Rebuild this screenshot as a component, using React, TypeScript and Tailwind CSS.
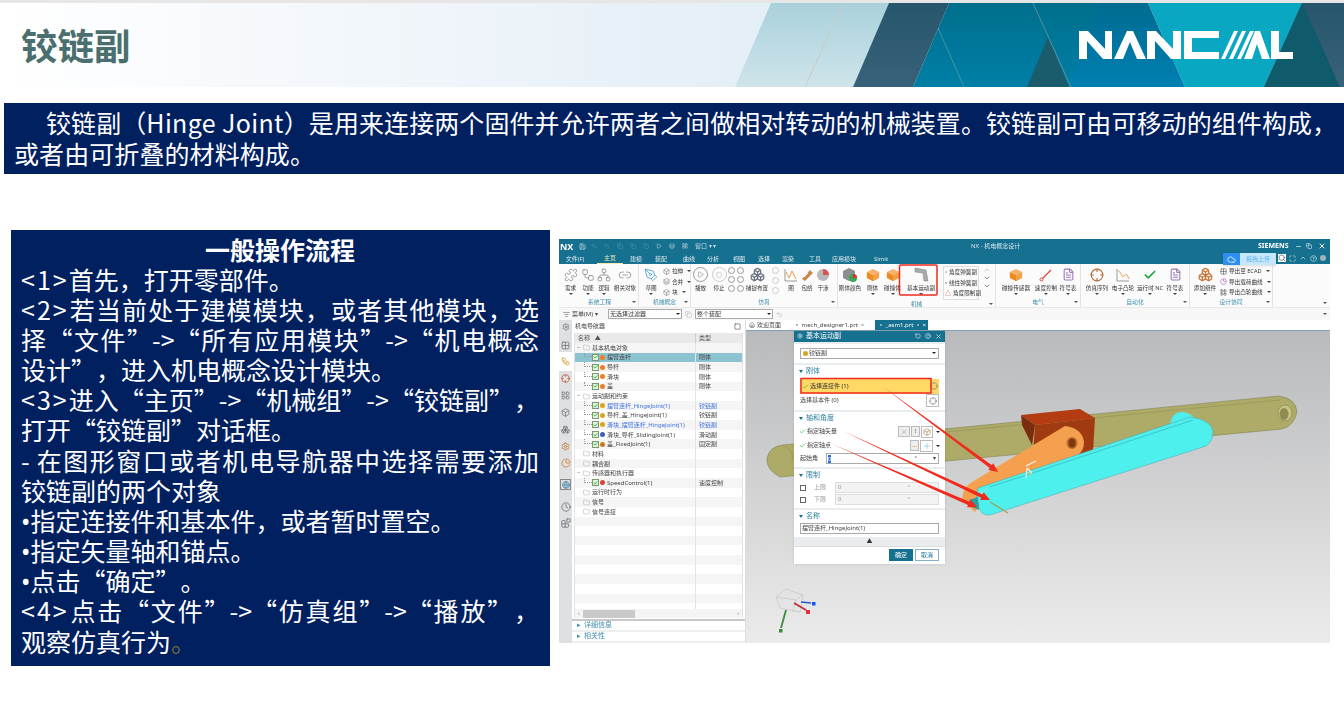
import React from "react";
import {
  Puzzle, Workflow, Network, Link2, PenTool, Settings, Grid2x2, Play, Square, ChevronUp, ChevronDown,
  Search, Maximize, CircleHelp, X, Minus, Copy, Folder, Check, RotateCcw, Crosshair, Clock, PieChart,
  Globe, Boxes, Box, Layers, ListFilter, Undo2, Save, LayoutGrid, House, FileText, Cloud, Share2, Blocks, Plus,
} from "lucide-react";

const CN = "font-['Noto_Sans_CJK_SC','Noto_Sans',sans-serif]";
const UI = "font-['Noto_Sans','Noto_Sans_CJK_SC',sans-serif]";

function Cube({ c = "#f08a1d", s = 15 }: { c?: string; s?: number }) {
  return (
    <svg width={s} height={s} viewBox="0 0 16 16">
      <path d="M8 1 15 4.500 8 8 1 4.500Z" fill={c} opacity="0.65" />
      <path d="M1 4.500 8 8V15L1 11.500Z" fill={c} />
      <path d="M15 4.500 8 8V15L15 11.500Z" fill={c} opacity="0.8" />
    </svg>
  );
}

function Caret() {
  return <span className="block w-0 h-0 border-x-[2px] border-x-transparent border-t-[2.500px] border-t-[#444] mt-[1px]" />;
}

function Tool({ w, label, icon, caret = true }: { w: number; label: string; icon: React.ReactNode; caret?: boolean }) {
  return (
    <div className="flex flex-col items-center shrink-0" style={{ width: w }}>
      <div className="h-[17px] flex items-center justify-center">{icon}</div>
      <span className="text-[5.600px] leading-[8px] mt-[1px] text-[#333] whitespace-nowrap">{label}</span>
      {caret && <Caret />}
    </div>
  );
}

function Group({ w, label, children, more = true }: { w: number; label: string; children: React.ReactNode; more?: boolean }) {
  return (
    <div className="flex flex-col shrink-0 border-r border-[#e4e4e4] h-full" style={{ width: w }}>
      <div className="flex-1 flex items-start pt-[2px]">{children}</div>
      <div className="relative h-[9px] text-center text-[5.800px] leading-[9px] text-[#3f8fae]">
        {label}
        {more && <span className="absolute right-[2px] top-[3px] w-0 h-0 border-x-[2px] border-x-transparent border-t-[2.500px] border-t-[#555]" />}
      </div>
    </div>
  );
}

function StackRow({ icon, label, caret = true }: { icon: React.ReactNode; label: string; caret?: boolean }) {
  return (
    <div className="flex items-center gap-[2px] h-[10.500px] text-[5.600px] text-[#333] whitespace-nowrap">
      {icon}
      <span>{label}</span>
      {caret && <span className="ml-[2px] w-0 h-0 border-x-[2px] border-x-transparent border-t-[2.500px] border-t-[#444]" />}
    </div>
  );
}

const gray = "#7b7f84";

function Ribbon() {
  return (
    <div className="flex h-[43px] bg-[#fbfbfb] pl-[2px]">
      <Group w={78} label="系统工程">
        <Tool w={19} label="需求" icon={<Puzzle size={14} color={gray} strokeWidth={1.2} />} />
        <Tool w={16} label="功能" icon={<Workflow size={14} color={gray} strokeWidth={1.2} />} />
        <Tool w={16} label="逻辑" icon={<Network size={14} color={gray} strokeWidth={1.2} />} />
        <Tool w={26} label="相关对象" caret={false} icon={<Link2 size={14} color={gray} strokeWidth={1.2} />} />
      </Group>
      <Group w={52} label="机械概念">
        <Tool w={24} label="草图" icon={<PenTool size={14} color="#3d96c9" strokeWidth={1.3} />} />
        <div className="flex flex-col">
          <StackRow icon={<Box size={7} color={gray} />} label="拉伸" />
          <StackRow icon={<Layers size={7} color={gray} />} label="合并" />
          <StackRow icon={<Box size={7} color={gray} />} label="块" />
        </div>
      </Group>
      <Group w={147} label="仿真">
        <Tool w={19} label="播放" caret={false} icon={<span className="w-[15px] h-[15px] rounded-full border border-[#999] flex items-center justify-center"><Play size={7} color="#888" /></span>} />
        <Tool w={18} label="停止" caret={false} icon={<span className="w-[15px] h-[15px] rounded-full border border-[#ccc] flex items-center justify-center"><Square size={6} color="#bbb" /></span>} />
        <div className="grid grid-cols-2 w-[18px] pt-[1px] shrink-0">
          {[0, 1, 2, 3, 4, 5].map((i) => <span key={i} className="w-[7px] h-[7px] mb-[2px] rounded-full border border-[#999]" />)}
        </div>
        <Tool w={22} label="捕捉布置" caret={false} icon={<Boxes size={15} color="#6b7280" />} />
        <div className="flex flex-col gap-[3px] w-[15px] shrink-0 items-center pt-[1px]">
          {[0, 1, 2].map((i) => <span key={i} className="w-[7px] h-[7px] rounded-full border border-[#ccc]" />)}
        </div>
        <Tool w={16} label="图" caret={false} icon={<svg width="14" height="14" viewBox="0 0 14 14" fill="none"><path d="M1 1V13H13" stroke="#999" /><path d="M2 4 5 10 8 3 12 11" stroke="#e89a4a" /></svg>} />
        <Tool w={16} label="包络" caret={false} icon={<svg width="14" height="14" viewBox="0 0 14 14"><path d="M2 11 10 2 13 5 5 13Z" fill="#c8894e" /><path d="M4 9 8 5" stroke="#fff" /></svg>} />
        <Tool w={16} label="干涉" caret={false} icon={<svg width="14" height="14" viewBox="0 0 14 14"><circle cx="7" cy="7" r="6" fill="#b9b9b9" /><path d="M7 1A6 6 0 0 1 13 7H7Z" fill="#d9534f" /></svg>} />
      </Group>
      <Group w={158} label="机械">
        <Tool w={24} label="刚体颜色" caret={false} icon={<svg width="16" height="16" viewBox="0 0 16 16"><path d="M7 1 13 4V11L7 14 1 11V4Z" fill="#8b8f94" /><circle cx="11" cy="11" r="4" fill="#3aa655" /><path d="M11 7A4 4 0 0 1 15 11H11Z" fill="#d9342c" /></svg>} />
        <Tool w={21} label="刚体" icon={<Cube s={14} />} />
        <Tool w={19} label="碰撞体" icon={<Cube s={14} />} />
        <Tool w={38} label="基本运动副" icon={<svg width="18" height="18" viewBox="0 0 18 18" fill="none"><path d="M3 2 14 4 16 15 12 15 11 7 3 6Z" fill="#a8abae" stroke="#777" strokeWidth="0.5" /></svg>} />
        <div className="flex flex-col border border-[#ddd] ml-[3px] px-[1px] w-[36px]">
          <StackRow caret={false} icon={<Share2 size={6} color="#c73" />} label="角度弹簧副" />
          <StackRow caret={false} icon={<Share2 size={6} color="#46a" />} label="线性弹簧副" />
          <StackRow caret={false} icon={<span className="text-[#d33] text-[6px] leading-none">△</span>} label="角度限制副" />
        </div>
        <div className="flex flex-col items-center text-[#555] ml-[3px] w-[9px]">
          <ChevronUp size={8} color="#aaa" />
          <ChevronDown size={8} />
          <ChevronDown size={8} />
        </div>
      </Group>
      <Group w={85} label="电气">
        <Tool w={40} label="碰撞传感器" icon={<Cube s={14} />} />
        <Tool w={20} label="速度控制" icon={<svg width="14" height="14" viewBox="0 0 14 14" fill="none"><path d="M2 12 12 2" stroke="#d9453a" strokeWidth="1.200" /><circle cx="2.500" cy="11.500" r="1.500" fill="#fff" stroke="#d9453a" /></svg>} />
        <Tool w={24} label="符号表" icon={<FileText size={13} color="#9a7ab8" />} />
      </Group>
      <Group w={109} label="自动化">
        <Tool w={32} label="仿真序列" icon={<Crosshair size={14} color="#b0703a" />} />
        <Tool w={20} label="电子凸轮" icon={<svg width="14" height="14" viewBox="0 0 14 14" fill="none"><path d="M1 1V13H13" stroke="#999" /><path d="M2 3C5 3 6 11 8 8S11 6 13 11" stroke="#e89a4a" /></svg>} />
        <Tool w={34} label="运行时 NC" icon={<Check size={14} color="#22a545" strokeWidth={3} />} />
        <Tool w={16} label="符号表" icon={<FileText size={13} color="#9a7ab8" />} />
      </Group>
      <Group w={83} label="设计协同">
        <Tool w={30} label="添加组件" icon={<Boxes size={15} color="#c8783a" />} />
        <div className="flex flex-col">
          <StackRow icon={<Grid2x2 size={7} color="#555" />} label="导出至 ECAD" />
          <StackRow icon={<PieChart size={7} color="#a04ab8" />} label="导出载荷曲线" />
          <StackRow icon={<LayoutGrid size={7} color="#555" />} label="导出凸轮曲线" />
        </div>
      </Group>
      <div className="flex-1 relative"><span className="absolute right-[3px] bottom-[3px] w-0 h-0 border-x-[2px] border-x-transparent border-t-[2.500px] border-t-[#555]" /></div>
    </div>
  );
}

const menu: [string, number][] = [["文件(F)", 575], ["主页", 610], ["建模", 636], ["装配", 661], ["曲线", 689], ["分析", 713], ["视图", 739], ["选择", 764], ["渲染", 788], ["工具", 815], ["应用模块", 844], ["Simit", 881]];

function TitleBars() {
  return (
    <div className="bg-[#16708f] text-white">
      <div className="h-[14px] flex items-center pl-[1px] pr-[4px]">
        <span className="font-bold text-[9px] leading-none w-[19px] shrink-0">NX</span>
        <Save size={7} color="#cfe3ea" className="shrink-0" />
        <div className="flex items-center gap-[7px] ml-[5px] w-[156px] shrink-0 opacity-75">
          <Undo2 size={6} color="#5fa0b8" /><Undo2 size={6} color="#5fa0b8" /><Copy size={6} color="#5fa0b8" /><Copy size={6} color="#5fa0b8" /><Copy size={6} color="#5fa0b8" />
          <Play size={6} color="#fff" /><Layers size={6} color="#fff" /><LayoutGrid size={6} color="#fff" />
          <span className="text-[6px] whitespace-nowrap">窗口 ▾ ▾</span>
        </div>
        <span className="ml-[224px] w-[140px] shrink-0 text-[6px] text-[#d6e6ec]">NX - 机电概念设计</span>
        <span className="ml-[147px] text-[7px] font-bold w-[37px] shrink-0">SIEMENS</span>
        <Minus size={7} className="shrink-0" />
        <Copy size={6} className="ml-[4px] shrink-0" />
        <X size={8} className="ml-[6px] shrink-0" strokeWidth={3} />
      </div>
      <div className="h-[11px] flex items-center text-[6px] text-[#d9e8ee]">
        {menu.map(([t, c], i) => {
          const prev = i ? menu[i - 1][1] + 13 : 559;
          return (
            <span key={t} className={`w-[26px] shrink-0 whitespace-nowrap text-center leading-[10px] ${i === 1 ? "text-[#f5e9b0] border-b border-[#f5e9b0]" : ""}`} style={{ marginLeft: c - 13 - prev }}>{t}</span>
          );
        })}
      </div>
    </div>
  );
}

function FilterBar() {
  const Sel = ({ w, t }: { w: number; t: string }) => (
    <div className="h-[10px] border border-[#aaa] bg-white flex items-center justify-between px-[1px] text-[6px] text-[#333]" style={{ width: w }}>
      <span>{t}</span><span className="w-0 h-0 border-x-[2px] border-x-transparent border-t-[2.500px] border-t-[#222]" />
    </div>
  );
  return (
    <div className="h-[13px] bg-[#f7f7f7] border-t border-[#e8e8e8] flex items-center pl-[4px] text-[6px] text-[#444]">
      <ListFilter size={7} color="#666" />
      <span className="ml-[2px] w-[36px]">菜单(M) ▾</span>
      <Sel w={74} t="无选择过滤器" />
      <Copy size={7} color="#bbb" className="mx-[3px]" />
      <Sel w={78} t="整个装配" />
      <Undo2 size={7} color="#bbb" className="ml-[3px]" />
      <span className="flex-1" />
      <span className="mr-[3px] w-0 h-0 border-x-[2px] border-x-transparent border-t-[2.500px] border-t-[#555]" />
    </div>
  );
}

function LeftStrip() {
  const c = "#6f7378";
  return (
    <div className="w-[13px] shrink-0 bg-[#dfe0e2] flex flex-col items-center">
      <Settings size={8} color={c} className="mt-[3px]" />
      <Grid2x2 size={9} color={c} className="mt-[10px]" />
      <div className="w-full h-[19px] bg-white flex items-center justify-center mt-[2px]"><Workflow size={9} color="#d2952a" /></div>
      <Crosshair size={9} color="#c0553a" className="mt-[3px]" />
      <LayoutGrid size={9} color={c} className="mt-[8px]" />
      <Box size={9} color={c} className="mt-[8px]" />
      <Boxes size={9} color={c} className="mt-[8px]" />
      <Settings size={9} color="#c0702a" className="mt-[8px]" />
      <PieChart size={10} color="#d08030" className="mt-[7px]" />
      <div className="w-[11px] h-[11px] border border-[#888] bg-[#ddd] flex items-center justify-center mt-[11px]"><Globe size={8} color="#2a7ca8" /></div>
      <Clock size={10} color={c} className="mt-[12px]" />
      <Blocks size={10} color={c} className="mt-[6px]" />
    </div>
  );
}

type Row = { l: number; n?: string; t?: string; blue?: boolean; sel?: boolean; folder?: boolean; minus?: boolean; dot?: string };
const rows: Row[] = [
  { l: 0, n: "基本机电对象", folder: true, minus: true },
  { l: 1, n: "摆臂连杆", t: "刚体", sel: true, dot: "#ef7d22" },
  { l: 1, n: "导杆", t: "刚体", dot: "#ef7d22" },
  { l: 1, n: "滑块", t: "刚体", dot: "#ef7d22" },
  { l: 1, n: "盖", t: "刚体", dot: "#ef7d22" },
  { l: 0, n: "运动副和约束", folder: true, minus: true },
  { l: 1, n: "摆臂连杆_HingeJoint(1)", t: "铰链副", blue: true, dot: "#d9a520" },
  { l: 1, n: "导杆_盖_HingeJoint(1)", t: "铰链副", dot: "#d9a520" },
  { l: 1, n: "滑块_摆臂连杆_HingeJoint(1)", t: "铰链副", blue: true, dot: "#d9a520" },
  { l: 1, n: "滑块_导杆_SlidingJoint(1)", t: "滑动副", dot: "#3a5fc0" },
  { l: 1, n: "盖_FixedJoint(1)", t: "固定副", dot: "#c87a20" },
  { l: 0, n: "材料", folder: true },
  { l: 0, n: "耦合副", folder: true },
  { l: 0, n: "传感器和执行器", folder: true, minus: true },
  { l: 1, n: "SpeedControl(1)", t: "速度控制", dot: "#d9453a" },
  { l: 0, n: "运行时行为", folder: true },
  { l: 0, n: "信号", folder: true },
  { l: 0, n: "信号连接", folder: true },
  ...Array.from({ length: 27 }, () => ({ l: 0 })),
];

function Nav() {
  return (
    <div className="w-[174px] shrink-0 bg-white flex flex-col border-r border-[#ddd] overflow-hidden">
      <div className="h-[13px] flex items-center justify-between pl-[3px] pr-[4px] text-[6px] text-[#444] shrink-0">
        <span>机电导航器</span>
        <Square size={7} color="#444" />
      </div>
      <div className="mx-[2px] flex-1 min-h-0 flex flex-col border-x border-[#e3e3e3] overflow-hidden">
        <div className="h-[10px] shrink-0 bg-[#e9e9e9] flex text-[6px] leading-[10px] text-[#555]">
          <span className="w-[121px] pl-[3px] border-r border-[#ccc]">名称 &nbsp; ▲</span>
          <span className="pl-[3px]">类型</span>
        </div>
        <div className="flex-1 min-h-0 overflow-hidden">
          {rows.map((r, i) => (
            <div key={i} className={`h-[9.650px] flex items-center text-[6px] leading-none ${r.sel ? "bg-[#8cc3d1]" : i % 2 ? "bg-white" : "bg-[#f5f5f5]"}`}>
              <div className="w-[121px] flex items-center shrink-0 border-r border-[#e4e4e4] h-full whitespace-nowrap" style={{ paddingLeft: r.l ? 9 : 2 }}>
                {r.folder && (
                  <>
                    <span className="w-[6px] text-[#777] text-[6px]">{r.minus ? "−" : ""}</span>
                    <Folder size={7} color="#888" strokeWidth={1.2} />
                  </>
                )}
                {r.dot && (
                  <>
                    <span className="w-[8px] h-1/2 self-start border-l border-b border-dotted border-[#999]" />
                    <span className="w-[7px] h-[7px] bg-[#dff3d8] border border-[#7b9a72] flex items-center justify-center"><Check size={6} color="#28a428" strokeWidth={4} /></span>
                    <span className="w-[5px] h-[5px] rounded-full ml-[1px]" style={{ backgroundColor: r.dot }} />
                  </>
                )}
                {r.n && <span className={`ml-[2px] ${r.blue ? "text-[#3f72e0]" : "text-[#444]"}`}>{r.n}</span>}
              </div>
              <span className={`pl-[3px] ${r.blue ? "text-[#3f72e0]" : "text-[#444]"}`}>{r.t}</span>
            </div>
          ))}
        </div>
        <div className="h-[9px] shrink-0 bg-[#f4f4f4] flex items-center text-[#777] text-[6px] px-[3px]">
          ‹<span className="ml-[3px] w-[52px] h-[8px] bg-[#c9c9c9]" /><span className="flex-1" />›
        </div>
      </div>
      <div className="h-[2px] bg-[#c8c8c8] mt-[1px] shrink-0" />
      <div className="h-[11px] shrink-0 flex items-center text-[7px] text-[#3f8fae] pl-[5px] border-b-[2px] border-[#eee]">▸ <span className="ml-[3px]">详细信息</span></div>
      <div className="h-[11px] shrink-0 flex items-center text-[7px] text-[#3f8fae] pl-[5px] border-b-[2px] border-[#eee]">▸ <span className="ml-[3px]">相关性</span></div>
    </div>
  );
}

function Section({ title, children }: { title: string; children: React.ReactNode }) {
  return (
    <div className="bg-white mt-[2px] pb-[2px]">
      <div className="h-[13px] flex items-center pl-[5px] text-[7px] text-[#2f7f9e]">
        <span className="w-0 h-0 border-x-[2.500px] border-x-transparent border-t-[3px] border-t-[#16708f] mr-[3px]" />
        {title}
      </div>
      {children}
    </div>
  );
}

function Ck() {
  return <Check size={7} color="#36c24a" strokeWidth={2.500} className="shrink-0" />;
}

function Dialog() {
  return (
    <div className="w-[151px] bg-[#e9edf0] shadow-sm flex flex-col text-[6px] text-[#444]">
      <div className="h-[11px] bg-[#16708f] text-white flex items-center px-[3px] text-[7px]">
        <Settings size={6} />
        <span className="ml-[3px] flex-1">基本运动副</span>
        <RotateCcw size={6} />
        <CircleHelp size={6} className="ml-[4px]" />
        <X size={7} className="ml-[4px]" />
      </div>
      <div className="bg-white mt-[2px] px-[6px] py-[4px]">
        <div className="h-[11px] border border-[#aaa] flex items-center px-[2px] justify-between">
          <span className="flex items-center gap-[1px]"><span className="w-[5px] h-[5px] rounded-full bg-[#d9a520]" />铰链副</span>
          <span className="w-0 h-0 border-x-[2px] border-x-transparent border-t-[2.500px] border-t-[#222]" />
        </div>
      </div>
      <Section title="刚体">
        <div className="h-[15px] mx-[6px] bg-[#ffd966] flex items-center pl-[2px] mt-[1px] justify-between text-[#333]">
          <span className="flex items-center gap-[1px]"><Ck />选择连接件 (1)</span>
          <Crosshair size={8} color="#888" className="mr-[1px]" />
        </div>
        <div className="h-[14px] mx-[6px] flex items-center justify-between">
          <span>选择基本件 (0)</span>
          <span className="w-[13px] h-[13px] border border-[#bbb] flex items-center justify-center"><Crosshair size={8} color="#888" /></span>
        </div>
      </Section>
      <Section title="轴和角度">
        <div className="h-[14px] mx-[5px] flex items-center justify-between">
          <span className="flex items-center gap-[1px]"><Ck />指定轴矢量</span>
          <span className="flex items-center gap-[1px]">
            <span className="w-[12px] h-[11px] border border-[#bbb] bg-[#eee] flex items-center justify-center"><X size={8} color="#555" strokeWidth={1} /></span>
            <span className="w-[9px] h-[11px] border border-[#bbb] bg-[#eee] text-center leading-[9px]">!</span>
            <span className="w-[12px] h-[12px] border border-[#bbb] flex items-center justify-center"><Box size={8} color="#a08a50" /></span>
            <span className="w-[3px] h-0 border-x-[2px] border-x-transparent border-t-[2.500px] border-t-[#222] ml-[2px]" />
          </span>
        </div>
        <div className="h-[14px] mx-[5px] flex items-center justify-between">
          <span className="flex items-center gap-[1px]"><Ck />指定轴点</span>
          <span className="flex items-center gap-[1px]">
            <span className="w-[9px] h-[11px] border border-[#bbb] bg-[#eee] text-center leading-[8px] text-[#c60]">…</span>
            <span className="w-[13px] h-[12px] border border-[#bbb] flex items-center justify-center"><Plus size={10} color="#38a8e0" strokeWidth={1} /></span>
            <span className="w-[3px] h-0 border-x-[2px] border-x-transparent border-t-[2.500px] border-t-[#222] ml-[2px]" />
          </span>
        </div>
        <div className="h-[12px] mx-[6px] flex items-center">
          <span className="w-[26px]">起始角</span>
          <div className="flex-1 h-[11px] border border-[#aaa] flex items-center">
            <span className="bg-[#2f6fd0] text-white w-[3px] h-[8px] ml-[1px] leading-[8px]">0</span>
            <span className="ml-auto mr-[16px]">°</span>
            <span className="mr-[2px]">▾</span>
          </div>
        </div>
      </Section>
      <Section title="限制">
        {["上限", "下限"].map((t) => (
          <div key={t} className="h-[12px] mx-[6px] flex items-center text-[#999]">
            <span className="w-[6px] h-[6px] border border-[#666]" />
            <span className="w-[21px] ml-[8px]">{t}</span>
            <div className="flex-1 h-[11px] border border-[#ddd] bg-[#f3f3f3] flex items-center pl-[2px]">0<span className="ml-[66px]">°</span></div>
          </div>
        ))}
      </Section>
      <Section title="名称">
        <div className="h-[11px] mx-[6px] border border-[#aaa] flex items-center pl-[1px] mb-[1px]">摆臂连杆_HingeJoint(1)</div>
      </Section>
      <div className="h-[10px] flex items-center justify-center text-[6px] text-[#333]">▲</div>
      <div className="flex justify-end gap-[2px] pr-[6px] pb-[3px] pt-[2px] border-t border-[#ddd] bg-white flex-1">
        <span className="w-[24px] h-[12px] bg-[#16708f] text-white text-center leading-[12px]">确定</span>
        <span className="w-[24px] h-[12px] border border-[#7fb3c6] text-[#16708f] text-center leading-[10px]">取消</span>
      </div>
    </div>
  );
}

function Model() {
  return (
    <svg className="absolute inset-0 w-full h-full" viewBox="746 331 584 312" preserveAspectRatio="none">
      <path d="M783 445 L1278 396 Q1296 398 1297 412 Q1294 426 1282 429 L780 477 Q766 470 767 458 Q770 446 783 445Z" fill="#aeaa68" stroke="#777a45" strokeWidth="0.500" />
      <path d="M783 445 Q795 450 792 462 M800 446 L1280 400" stroke="#8d8b50" strokeWidth="0.500" fill="none" />
      <ellipse cx="1285" cy="413" rx="7" ry="8" fill="#c7c585" stroke="#77773f" strokeWidth="0.500" />
      <ellipse cx="1284" cy="414" rx="4.500" ry="6" fill="#8f8c52" />
      <path d="M1021 415 1080 409 1095 418 1035 425Z" fill="#b43c12" />
      <path d="M1035 425 1095 418 1093 452 1032 470Z" fill="#a03a10" />
      <path d="M1021 415 1035 425 1032 445 1022 425Z" fill="#7c2c0e" />
      <path d="M1065 426 Q1082 428 1084 442 Q1084 452 1076 456 L992 490 975 512 962 500 Q962 488 972 482Z" fill="#f5a04e" />
      <ellipse cx="1072" cy="443" rx="5.500" ry="6" fill="#c06c28" />
      <ellipse cx="1072" cy="443" rx="3.500" ry="4.500" fill="#7a3a10" />
      <path d="M1170 423 Q1173 411 1183 412 Q1192 413 1195 420Z" fill="#4ef0ee" />
      <path d="M978 488 L1190 417 Q1212 420 1213 432 Q1212 445 1203 447 L990 515 Q980 516 979 506 Q975 496 978 488Z" fill="#4ef0ee" stroke="#48a8b0" strokeWidth="0.500" />
      <path d="M990 487 L1193 420" stroke="#2f9aa2" strokeWidth="0.500" fill="none" />
      <path d="M979 492 L990 487 Q978 495 980 506Z" fill="#7ee8ea" />
      <path d="M969 500 978 497 979 510 972 507Z" fill="#2aa0a8" />
      <path d="M990 502 1008 513" stroke="#a89a50" strokeWidth="1.200" />
      <path d="M1026 466 1036 461 M1027 468 1026 478 M1027 468 1032 473" stroke="#f2f2f2" strokeWidth="1.200" />
      <path d="M1027 472 1032 475" stroke="#f0d050" strokeWidth="1" />
      <path d="M776 597 786 589 803 595 800 612 780 608Z M776 597 796 600 803 595 M796 600 793 612" fill="none" stroke="#c9c9c9" strokeWidth="0.800" />
      <path d="M786 610 781 628" stroke="#3c8a3c" strokeWidth="1.800" />
      <rect x="779" y="629" width="3.500" height="3.500" fill="#3c8a3c" />
      <path d="M794 603 806 610" stroke="#c0343a" strokeWidth="2" />
      <rect x="806" y="610" width="4" height="4" fill="#e0303a" />
      <path d="M801 602 811 603" stroke="#2456d8" strokeWidth="1.500" />
      <rect x="812" y="602" width="3.500" height="3.500" fill="#1a50f0" />
    </svg>
  );
}

function Arrow({ x1, y1, x2, y2, w = 3.5 }: { x1: number; y1: number; x2: number; y2: number; w?: number }) {
  const d = Math.hypot(x2 - x1, y2 - y1);
  const ux = (x2 - x1) / d;
  const uy = (y2 - y1) / d;
  const nx = -uy;
  const ny = ux;
  const bx = x2 - ux * 9;
  const by = y2 - uy * 9;
  const p = [
    [x1, y1],
    [bx + (nx * w) / 2, by + (ny * w) / 2],
    [bx + nx * 4.2, by + ny * 4.2],
    [x2, y2],
    [bx - nx * 4.2, by - ny * 4.2],
    [bx - (nx * w) / 2, by - (ny * w) / 2],
  ].map((a) => a.join(",")).join(" ");
  return <polygon points={p} fill="#f02a1c" />;
}

function Overlay() {
  return (
    <svg className="absolute inset-0 w-full h-full pointer-events-none" viewBox="559 239 771 404">
      <rect x="899.500" y="265" width="37.500" height="30" rx="1" fill="none" stroke="#ef2b20" strokeWidth="1.500" />
      <rect x="801" y="378.500" width="130" height="14.500" fill="none" stroke="#ef2b20" strokeWidth="1.500" />
      <Arrow x1={882} y1={386} x2={998} y2={472} />
      <Arrow x1={843} y1={431} x2={990} y2={500} />
      <Arrow x1={832} y1={444} x2={977} y2={507} />
    </svg>
  );
}

function NXWindow() {
  return (
    <div className={`relative w-[771px] h-[404px] mt-[9px] ml-[9px] shrink-0 overflow-hidden flex flex-col bg-[#dfe0e2] blur-[0.35px] ${UI}`}>
      <TitleBars />
      <Ribbon />
      <FilterBar />
      <div className="flex-1 min-h-0 flex">
        <LeftStrip />
        <Nav />
        <div className="flex-1 min-w-0 flex flex-col">
          <div className="h-[11px] shrink-0 bg-white flex items-center text-[6px] text-[#444] border-b border-[#7fa0b0]">
            <span className="w-[46px] flex items-center gap-[2px] pl-[3px]"><House size={6} />欢迎页面</span>
            <span className="w-[83px] pl-[2px]">▫ mech_designer1.prt ▫</span>
            <span className="w-[53px] h-full bg-[#16708f] text-white leading-[11px] pl-[3px]">▫ _asm1.prt ▫ ×</span>
          </div>
          <div className="relative flex-1 min-h-0 bg-gradient-to-b from-[#b9babc] to-[#ebebeb] pl-[48px]">
            <Model />
            <div className="relative h-[232px] flex"><Dialog /></div>
          </div>
        </div>
      </div>
      <div className="absolute right-[54px] top-[14px] w-[53px] h-[12px] flex shadow-sm">
        <span className="w-[17px] bg-[#2f8fee] flex items-center justify-center"><Cloud size={9} color="#fff" /></span>
        <span className="flex-1 bg-[#c6e6fb] text-[#64b5f0] text-[6px] leading-[12px] text-center">拖拽上传</span>
      </div>
      <div className="absolute right-[4px] top-[15px] flex items-center gap-[3px] text-[#d5e5ea]">
        <Search size={8} className="bg-white" color="#555" />
        <Maximize size={7} />
        <ChevronUp size={8} />
        <CircleHelp size={7} />
        <span className="w-[6px] h-[6px] rounded-full bg-[#9db4bc]" />
      </div>
      <Overlay />
    </div>
  );
}

function HeaderArt() {
  return (
    <svg className="absolute inset-0 w-full h-full" viewBox="0 3 1344 84" preserveAspectRatio="none">
      <defs>
        <linearGradient id="lt" x1="0" y1="0" x2="0" y2="1"><stop offset="0" stopColor="#a9d1dc" /><stop offset="1" stopColor="#cfe4ea" /></linearGradient>
        <linearGradient id="bl" x1="0" y1="0" x2="0" y2="1"><stop offset="0" stopColor="#006b90" /><stop offset="1" stopColor="#0080b2" /></linearGradient>
        <linearGradient id="sl" x1="0" y1="0" x2="0" y2="1"><stop offset="0" stopColor="#27566c" /><stop offset="1" stopColor="#38627a" /></linearGradient>
        <linearGradient id="ba" x1="0" y1="0" x2="0" y2="1"><stop offset="0" stopColor="#006f8d" /><stop offset="1" stopColor="#007fa6" /></linearGradient>
      </defs>
      <path d="M771 3 735 87H853L889 3Z" fill="url(#lt)" />
      <path d="M843 3 805 87" stroke="#c8ccc8" strokeWidth="1" />
      <path d="M913 87 949 3H1148V87Z" fill="url(#ba)" />
      <path d="M889 3 853 87H913L949 3Z" fill="url(#sl)" />
      <path d="M1048 37 1027 87H1069Z" fill="#1b5c6c" />
      <path d="M1100 3H1148L1185 87H1069Z" fill="url(#bl)" />
      <path d="M1033 3 1071 87" stroke="#7f9aa2" strokeWidth="0.700" />
      <path d="M938 28 964 87" stroke="#5fa0b0" strokeWidth="0.700" />
      <path d="M1148 3H1302L1264 87H1185Z" fill="#0aa7c3" />
      <path d="M1302 3 1264 87H1344V3Z" fill="url(#sl)" />
      <path d="M1302 3 1264 87H1340Z" fill="#0f5a6b" />
    </svg>
  );
}

function Logo() {
  return (
    <svg className="absolute left-[1079px] top-[31px]" width="215" height="28" viewBox="0 0 215 28" fill="#fff">
      <path d="M0 0H9L26 18V0H33V28H24L8 10V28H0Z" />
      <path d="M35 28 48 0H54L67 28H58L51 11 44 28Z" />
      <path d="M68 0H77L94 18V0H102V28H92L76 10V28H68Z" />
      <path d="M105 0H140V7H113V21H140V28H105Z" />
      <path d="M142 28 155 0H159L146 28Z" />
      <path d="M150 28 163 0H167L154 28Z" />
      <path d="M158 28 171 0H175L162 28Z" />
      <path d="M165 28 176 0H181L191 28H183L178 13 173 28Z" />
      <path d="M192 0H200V21H214V28H192Z" />
    </svg>
  );
}

function Bullet() {
  return <span className="font-['Noto_Sans',sans-serif] leading-none">•</span>;
}

function J({ children }: { children: React.ReactNode }) {
  return <span className="block [text-align-last:justify]">{children}</span>;
}

function N({ children }: { children: React.ReactNode }) {
  return <span className="tracking-[2px]">{children}</span>;
}

export default function App() {
  return (
    <div lang="zh-CN" className={`relative w-[1344px] h-[722px] bg-white overflow-hidden [text-spacing-trim:space-all] ${CN}`}>
      <div className="h-[3px] bg-[#e6e6e6]" />
      <div className="relative h-[84px] ml-[4px] bg-gradient-to-r from-white via-[#e9f1f8] via-45% to-[#d3e6ec] flex items-center overflow-hidden">
        <h1 className="relative pl-[17px] text-[36.500px] leading-none font-bold text-[#4b6f6f]">铰链副</h1>
      </div>
      <div className="absolute left-0 top-[3px] w-[1344px] h-[84px] pointer-events-none">
        <HeaderArt />
      </div>
      <div className="absolute left-0 top-0 w-[1344px] h-[87px] pointer-events-none"><Logo /></div>
      <div className="mt-[16px] ml-[4px] h-[71px] bg-[#002060] text-white text-[25px] leading-[31px] pl-[10px] pt-[4px] tracking-[0.08px] whitespace-nowrap">
        <p className="pl-[32px]">铰链副（<span className="tracking-[0.35px]">Hinge Joint</span>）是用来连接两个固件并允许两者之间做相对转动的机械装置。铰链副可由可移动的组件构成，</p>
        <p>或者由可折叠的材料构成。</p>
      </div>
      <div className="mt-[56px] ml-[11px] flex items-start">
        <div className="w-[539px] h-[436px] shrink-0 bg-[#002060] text-white text-[25px] leading-[30.150px] pt-[3.500px] pl-[10px] pr-[11px]">
          <p className="text-center font-bold">一般操作流程</p>
          <p><N>&lt;1&gt;</N>首先，打开零部件。</p>
          <p>
            <J><N>&lt;2&gt;</N>若当前处于建模模块，或者其他模块，选</J>
            <J>择“文件”-&gt;“所有应用模块”-&gt;“机电概念</J>
            设计”，进入机电概念设计模块。
          </p>
          <p>
            <J><N>&lt;3&gt;</N>进入“主页”-&gt;“机械组”-&gt;“铰链副”，</J>
            打开“铰链副”对话框。
          </p>
          <p>
            <J>- 在图形窗口或者机电导航器中选择需要添加</J>
            铰链副的两个对象
          </p>
          <p><Bullet />指定连接件和基本件，或者暂时置空。</p>
          <p><Bullet />指定矢量轴和锚点。</p>
          <p><Bullet />点击“确定”。</p>
          <p>
            <J><N>&lt;4&gt;</N>点击“文件”-&gt;“仿真组”-&gt;“播放”，</J>
            观察仿真行为<span className="text-[#6b6b40]">。</span>
          </p>
        </div>
        <NXWindow />
      </div>
    </div>
  );
}
